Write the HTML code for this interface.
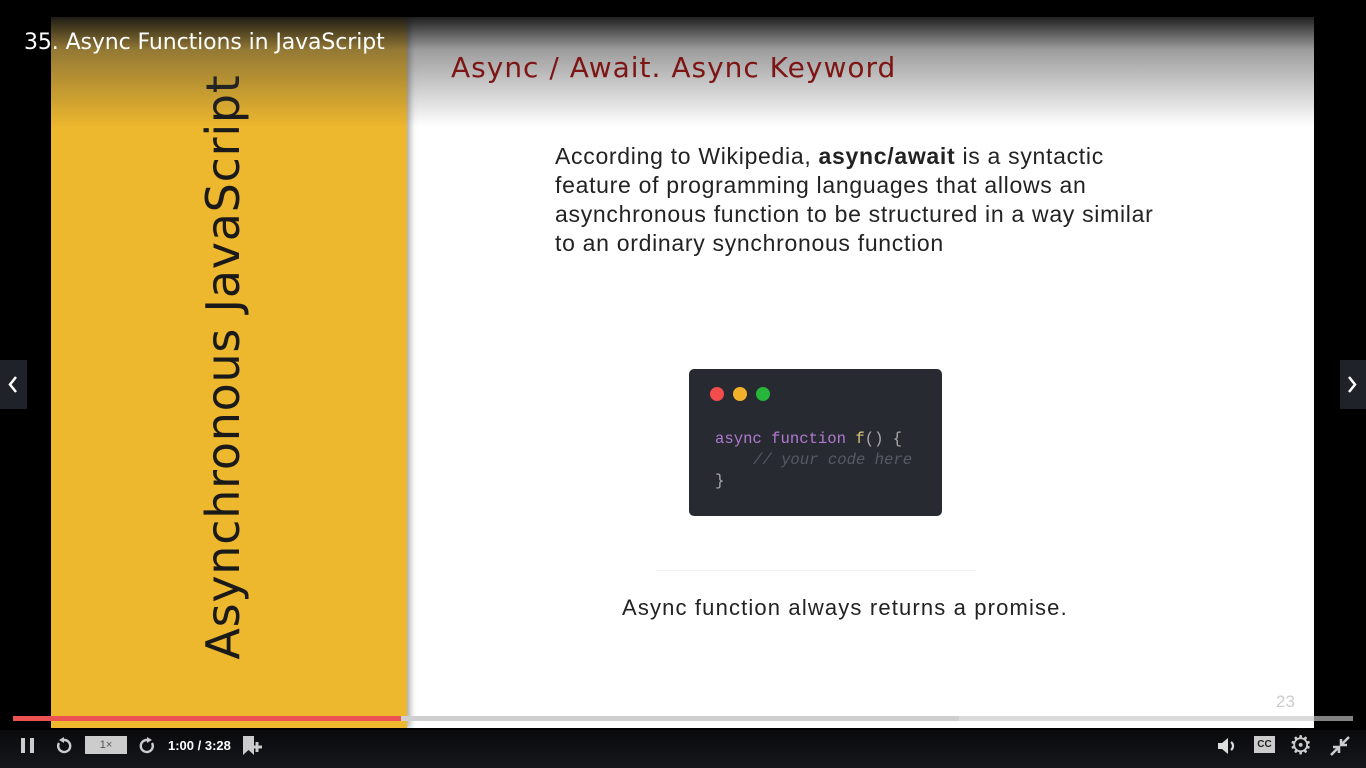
<!DOCTYPE html>
<html><head><meta charset="utf-8"><style>
*{margin:0;padding:0;box-sizing:border-box}
body{width:1366px;height:768px;overflow:hidden;background:#000;font-family:"Liberation Sans","DejaVu Sans",sans-serif;position:relative}
.video{position:absolute;left:51px;top:17px;width:1263px;height:711px;background:#fff;overflow:hidden}
.yellow{position:absolute;left:0;top:0;width:356px;height:711px;background:#edb72e;box-shadow:3px 0 6px rgba(0,0,0,.35)}
.vt{position:absolute;left:172px;top:350px;transform:translate(-50%,-50%) rotate(-90deg);white-space:nowrap;font-family:"DejaVu Sans",sans-serif;font-size:46px;color:#1a1a1a;letter-spacing:0.75px}
.topshade{position:absolute;left:0;top:0;width:1263px;height:110px;background:linear-gradient(rgba(20,20,20,.95) 0%,rgba(60,60,60,.5) 30%,rgba(255,255,255,0) 100%)}
.title{position:absolute;left:400px;top:34px;font-family:"DejaVu Sans",sans-serif;font-size:28px;color:#7e1515;letter-spacing:1px}
.para{position:absolute;left:504px;top:125px;width:720px;font-size:23px;line-height:29px;color:#222;letter-spacing:0.7px}
.code{position:absolute;left:638px;top:352px;width:253px;height:147px;background:#272a31;border-radius:5px}
.dot{position:absolute;top:18px;width:14px;height:14px;border-radius:50%}
.mono{position:absolute;font-family:"Liberation Mono",monospace;font-size:15.6px}
.foot{position:absolute;left:571px;top:578px;font-size:22px;color:#222;letter-spacing:1.15px}
.pg{position:absolute;left:1225px;top:675px;font-size:17px;color:#ccc}
.h1{position:absolute;left:24px;top:30px;font-family:"DejaVu Sans",sans-serif;font-size:22px;color:#fff;letter-spacing:-0.1px}
.bar{position:absolute;left:0;top:730px;width:1366px;height:38px;background:linear-gradient(#0a0a0c,#15171c)}
.nav{position:absolute;top:360px;width:27px;height:49px;background:#1f2228}
</style></head><body>
<div class="video">
 <div class="yellow"><div class="vt">Asynchronous JavaScript</div></div>
 <div class="topshade"></div>
 <div class="title">Async / Await. Async Keyword</div>
 <div class="para">According to Wikipedia, <b>async/await</b> is a syntactic<br>feature of programming languages that allows an<br>asynchronous function to be structured in a way similar<br>to an ordinary synchronous function</div>
 <div class="code">
  <div class="dot" style="left:21px;background:#f24c4c"></div>
  <div class="dot" style="left:44px;background:#f3b12b"></div>
  <div class="dot" style="left:67px;background:#27b53c"></div>
  <div class="mono" style="left:26px;top:61px;color:#b07ad0">async function <span style="color:#d9c27a">f</span><span style="color:#aaa">() {</span></div>
  <div class="mono" style="left:64px;top:82px;color:#555a66;font-style:italic">// your code here</div>
  <div class="mono" style="left:26px;top:103px;color:#aaa">}</div>
 </div>
 <div style="position:absolute;left:605px;top:553px;width:320px;height:1px;background:#f2f2f2"></div>
 <div class="foot">Async function always returns a promise.</div>
 <div class="pg">23</div>
</div>
<div class="h1">35. Async Functions in JavaScript</div>
<div class="nav" style="left:0"><svg width="27" height="49"><path d="M16 17 L10 24.5 L16 32" stroke="#fff" stroke-width="2.5" fill="none"/></svg></div>
<div class="nav" style="left:1340px;width:26px"><svg width="26" height="49"><path d="M9 17 L15 24.5 L9 32" stroke="#fff" stroke-width="2.5" fill="none"/></svg></div>
<div style="position:absolute;left:13px;top:716px;width:1340px;height:5px;background:rgba(200,200,200,.65)"></div>
<div style="position:absolute;left:13px;top:716px;width:946px;height:5px;background:#cfcfcf"></div>
<div style="position:absolute;left:13px;top:716px;width:388px;height:5px;background:#ec5252"></div>
<div class="bar">
 <div style="position:absolute;left:21px;top:8px;width:4px;height:15px;background:#ccc"></div>
 <div style="position:absolute;left:30px;top:8px;width:4px;height:15px;background:#ccc"></div>
 <svg style="position:absolute;left:55px;top:7px" width="18" height="18"><path d="M4 6 A6 6 0 1 0 9 3" stroke="#ccc" stroke-width="2.4" fill="none"/><path d="M9 0 L4 3 L9 6Z" fill="#ccc"/></svg>
 <div style="position:absolute;left:85px;top:6px;width:42px;height:18px;background:#ccc;color:#555;font-size:11px;text-align:center;line-height:18px">1×</div>
 <svg style="position:absolute;left:138px;top:7px" width="18" height="18"><path d="M14 6 A6 6 0 1 1 9 3" stroke="#ccc" stroke-width="2.4" fill="none"/><path d="M9 0 L14 3 L9 6Z" fill="#ccc"/></svg>
 <div style="position:absolute;left:168px;top:8px;color:#fff;font-size:13px;font-weight:bold">1:00 / 3:28</div>
 <svg style="position:absolute;left:242px;top:5px" width="22" height="22"><path d="M1 1 H12 V20 L6.5 15 L1 20Z" fill="#ccc"/><path d="M15 7 V17 M10 12 H20" stroke="#ccc" stroke-width="3"/></svg>
 <svg style="position:absolute;left:1217px;top:6px" width="22" height="20"><path d="M1 7 H5 L11 2 V18 L5 13 H1Z" fill="#ddd"/><path d="M14 6 A5 5 0 0 1 14 14" stroke="#ddd" stroke-width="2.2" fill="none"/></svg>
 <div style="position:absolute;left:1254px;top:6px;width:21px;height:17px;background:#ccc;color:#222;font-size:10px;text-align:center;line-height:17px;font-weight:bold">CC</div>
 <div style="position:absolute;left:1289px;top:3px;color:#ccc;font-size:26px;line-height:24px">⚙</div>
 <svg style="position:absolute;left:1328px;top:4px" width="24" height="24"><path d="M3 21 L10 14 M5 13 H11 V19 M21 3 L14 10 M13 5 V11 H19" stroke="#ccc" stroke-width="2.5" fill="none"/></svg>
</div>
</body></html>
